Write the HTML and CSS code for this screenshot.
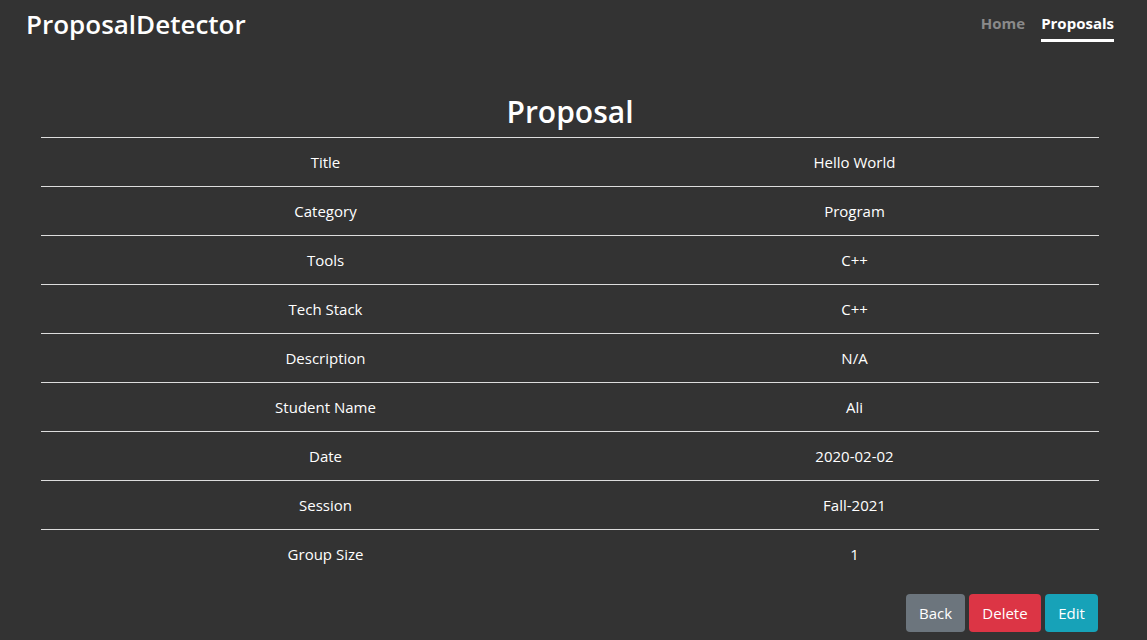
FILE: index.html
```html
<!DOCTYPE html>
<html>
<head>
<meta charset="utf-8">
<link rel="stylesheet" href="styles.css">
</head>
<body>
<header class="navbar">
  <div class="brand">ProposalDetector</div>
  <nav class="nav">
    <a class="nav-link">Home</a>
    <a class="nav-link active">Proposals</a>
  </nav>
</header>
<main class="content">
  <h2 class="page-title">Proposal</h2>
  <table class="details">
    <tbody>
      <tr><td>Title</td><td>Hello World</td></tr>
      <tr><td>Category</td><td>Program</td></tr>
      <tr><td>Tools</td><td>C++</td></tr>
      <tr><td>Tech Stack</td><td>C++</td></tr>
      <tr><td>Description</td><td>N/A</td></tr>
      <tr><td>Student Name</td><td>Ali</td></tr>
      <tr><td>Date</td><td>2020-02-02</td></tr>
      <tr><td>Session</td><td>Fall-2021</td></tr>
      <tr><td>Group Size</td><td>1</td></tr>
    </tbody>
  </table>
  <div class="actions">
    <button class="btn btn-back">Back</button>
    <button class="btn btn-delete">Delete</button>
    <button class="btn btn-edit">Edit</button>
  </div>
</main>
</body>
</html>
```
FILE: styles.css
```css
* { box-sizing: border-box; }
html, body { margin: 0; padding: 0; }
body {
  background: #333333;
  color: #ffffff;
  font-family: "Open Sans", "Noto Sans", sans-serif;
  font-size: 15px;
  height: 640px;
  overflow: hidden;
}
.navbar {
  display: flex;
  justify-content: space-between;
  align-items: flex-start;
  padding: 0 33px 0 26px;
  height: 70px;
}
.brand {
  font-size: 26px;
  font-weight: 600;
  line-height: 1;
  padding-top: 11px;
}
.nav {
  display: flex;
  gap: 16px;
  padding-top: 13px;
}
.nav-link {
  font-size: 15px;
  font-weight: 700;
  color: #8a8a8a;
  line-height: 20px;
  padding-bottom: 6px;
  border-bottom: 3px solid transparent;
}
.nav-link.active {
  color: #ffffff;
  border-bottom-color: #ffffff;
}
.content {
  padding: 0 48px 0 41px;
}
.page-title {
  margin: 20px 0 0;
  text-align: center;
  font-size: 30px;
  font-weight: 600;
  line-height: 43px;
  padding-bottom: 4px;
}
.details {
  width: 100%;
  border-collapse: collapse;
}
.details td {
  border-top: 1px solid #dddddd;
  padding: 12px;
  line-height: 24px;
  text-align: center;
  font-size: 15px;
}
.details td:first-child { width: 569px; }
.actions {
  display: flex;
  justify-content: flex-end;
  gap: 4px;
  margin-top: 16px;
  padding-right: 1px;
}
.btn {
  font-family: inherit;
  font-size: 15px;
  color: #ffffff;
  border: none;
  border-radius: 4px;
  height: 38px;
  padding: 0 12px;
  cursor: pointer;
}
.btn-back { background: #6c757d; width: 59px; }
.btn-delete { background: #dc3545; width: 72px; }
.btn-edit { background: #17a2b8; width: 53px; }
```
